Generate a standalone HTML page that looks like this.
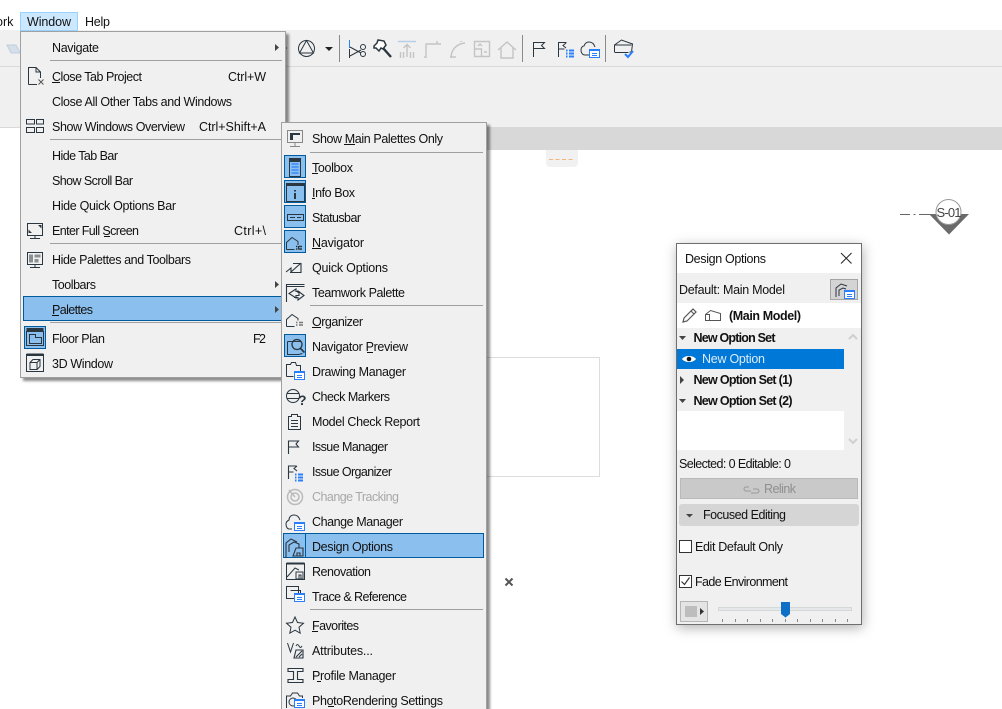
<!DOCTYPE html>
<html><head><meta charset="utf-8"><title>Design Options</title>
<style>
html,body{margin:0;padding:0;background:#fff;width:1002px;height:709px;overflow:hidden}
svg{display:block}
text{font-family:"Liberation Sans",sans-serif;font-size:12.5px;fill:#111}
.i{fill:none;stroke:#2a3640;stroke-width:1}
.g{fill:none;stroke:#c4c4c4;stroke-width:1.4}
.b{font-weight:bold}
</style></head><body>
<svg width="1002" height="709" viewBox="0 0 1002 709" xmlns="http://www.w3.org/2000/svg">
<defs>
<filter id="ms" x="-5%" y="-5%" width="112%" height="112%"><feDropShadow dx="3" dy="3" stdDeviation="1.4" flood-color="#000" flood-opacity=".45"/></filter>
<filter id="ds" x="-20%" y="-10%" width="140%" height="120%"><feDropShadow dx="1" dy="3" stdDeviation="6" flood-color="#000" flood-opacity=".3"/></filter>
<g id="card"><rect x=".5" y=".5" width="10" height="8" fill="#fff" stroke="#2a7fff"/><path d="M1 1.5h9M3 4.5h5M3 6.5h5" stroke="#2a7fff" fill="none"/></g>
<g id="dots"><path d="M0 .5h1.500M3 .5h5M0 3.500h1.500M3 3.500h5M0 6.500h1.500M3 6.500h5" stroke="#2a7fff" stroke-width="2" fill="none"/></g>
</defs>

<!-- app chrome -->
<rect x="0" y="30" width="1002" height="97" fill="#f0f0f0"/>
<rect x="0" y="66" width="1002" height="1" fill="#d9d9d9"/>
<rect x="0" y="127" width="1002" height="1" fill="#d9d9d9"/>
<rect x="281" y="127" width="721" height="23" fill="#d8d8d8"/>
<path d="M546 150h32v13a4 4 0 0 1-4 4h-24a4 4 0 0 1-4-4z" fill="#f1f1f1"/>
<path d="M549 159.500h26" stroke="#f5b57f" stroke-dasharray="4 2.500"/>
<path d="M7 45h9l4 8h-9z" fill="#d5dfea" stroke="#c0cede"/>

<!-- menu bar -->
<rect x="20.500" y="12.500" width="57" height="18" fill="#cce8ff" stroke="#99d1ff"/>
<text x="-4" y="26">ork</text>
<text x="27" y="26" textLength="44">Window</text>
<text x="85" y="26" textLength="25">Help</text>

<!-- toolbar -->
<g class="i"><circle cx="306.500" cy="48.500" r="8"/><path d="M306.500 40.500l7 12.500h-14z"/></g>
<path d="M325 47h8l-4 4z" fill="#222"/>
<path d="M339.500 35v27M522.500 35v27M605.500 35v27" stroke="#8a8a8a"/>
<path d="M349.500 40v8" stroke="#2a7fff"/><path d="M349.500 49v9" stroke="#2a3640"/>
<g class="i"><path d="M350 47l11 6M350 56l11-6"/><circle cx="363" cy="47" r="2.500"/><circle cx="363" cy="54" r="2.500"/></g>
<path d="M374 46l3-3 1-3 6 1 2 4-3 4-2-1-2 3-3-3-2 0z" fill="#fff" stroke="#2a3640" stroke-width="1.500"/><path d="M383 48l8 9" stroke="#2a3640" stroke-width="2.400"/>
<g class="g"><path d="M398 41.500h18" stroke="#b6cfe8"/><path d="M407 57V45M403.500 48l3.500-3.500 3.500 3.500M400.500 52v6M403.500 52v6M410.500 52v6M413.500 52v6"/>
<path d="M425 57h-1M426 58V44h15M426 57v-5M437 44v-3"/>
<path d="M450 57h6M451 58c0-8 5-14 14-15M461 42v-1"/>
<path d="M474.500 41.500h15v15h-15zM474.500 49h7v7.500M478 46l2-2 2 2M484 52l3 0"/>
<path d="M498 50l9-8 9 8M501 48v10h12V48"/></g>
<path d="M533.500 57V42.500h11l-3 3 3 3h-11" class="i" stroke-width="1.200"/>
<path d="M558.500 57V42.500h8M558.500 49h6M566 43l-3 2.500 3 2.500" class="i" stroke-width="1.200"/>
<use href="#dots" x="566" y="50"/>
<path d="M589 55h-4c-3 0-4-3-4-5 0-3 2-4 3-4 1-3 3-4 5-4 3 0 5 2 6 5" class="i"/>
<use href="#card" x="589" y="49"/>
<path d="M614.500 52V45l7-5 11 4-1 8-2 0M614.500 45h17M614.500 52.500h14" class="i" stroke-width="1.200"/>
<path d="M625 54l3 3 5-6" fill="none" stroke="#2a7fff" stroke-width="2"/>
<circle cx="286" cy="48" r=".8" fill="#333"/>

<!-- canvas -->
<path d="M487 357.500h112.500v119H487" fill="none" stroke="#dcdcdc"/>
<path d="M505.500 578.500l7 7M512.500 578.500l-7 7" stroke="#555" stroke-width="2"/>
<path d="M900 214.500h10M913.500 214.500h2M919 214.500h11" stroke="#666"/>
<path d="M929 214h40l-20 20.500z" fill="#6a6a6a"/>
<circle cx="948.500" cy="212" r="12.500" fill="#fff" stroke="#999"/>
<text x="936.500" y="217" textLength="25" style="fill:#444;font-size:13px">S-01</text>

<!-- Window menu -->
<g filter="url(#ms)"><rect x="20.500" y="31.500" width="265" height="346" fill="#f0f0f0" stroke="#a0a0a0"/></g>
<path d="M50 60.500h232M50 139.500h232M50 243.500h232M50 322.500h232" stroke="#a0a0a0"/>
<rect x="23.500" y="296.500" width="258" height="24" fill="#8bbfee" stroke="#005a9e"/>
<rect x="24.500" y="326.500" width="21" height="22" fill="#8bbfee" stroke="#005a9e"/>
<g>
<text x="52" y="52" textLength="47">Navigate</text>
<text x="52" y="81" textLength="90">Close Tab Project</text>
<text x="52" y="106" textLength="180">Close All Other Tabs and Windows</text>
<text x="52" y="131" textLength="133">Show Windows Overview</text>
<text x="52" y="160" textLength="66">Hide Tab Bar</text>
<text x="52" y="185" textLength="81">Show Scroll Bar</text>
<text x="52" y="210" textLength="124">Hide Quick Options Bar</text>
<text x="52" y="235" textLength="87">Enter Full Screen</text>
<text x="52" y="264" textLength="139">Hide Palettes and Toolbars</text>
<text x="52" y="289" textLength="44">Toolbars</text>
<text x="52" y="314" textLength="41">Palettes</text>
<text x="52" y="343" textLength="53">Floor Plan</text>
<text x="52" y="368" textLength="61">3D Window</text>
<text x="228" y="81" textLength="38">Ctrl+W</text>
<text x="199" y="131" textLength="67">Ctrl+Shift+A</text>
<text x="234" y="235" textLength="32">Ctrl+\</text>
<text x="253" y="343" textLength="13">F2</text>
</g>
<path d="M52 82.500h8M104 236.500h6M52 315.500h7" stroke="#111"/>
<path d="M275 44l4 3.500-4 3.500zM275 281l4 3.500-4 3.500zM275 306l4 3.500-4 3.500z" fill="#444"/>
<g class="i">
<path d="M28.500 84.500V67.500H36l4.500 4.500v6M36 67.500v4.500h4.500M28.500 84.500H37"/><path d="M38.500 79.500l5 5M43.500 79.500l-5 5" stroke="#555"/>
<path d="M26.500 119.500h8v4.500h-8zM36.500 119.500h7v4.500h-7zM26.500 127.500h8v5h-8zM36.500 127.500h7v5h-7z"/>
<path d="M27.500 223.500h15v12h-15zM35 236v2.500M30 238.500h10"/>
<path d="M27.500 252.500h15v12h-15zM35 265v2.500M30 267.500h10"/>
<path d="M26.500 331.500h17v14h-17zM29.500 334.500h6v3h6v6h-12z"/>
<path d="M26.500 354.500h17v17h-17zM30 362.500h7v7h-7zM30 362.500l3-3h7v7l-3 3M37 362.500l3-3"/>
</g>
<path d="M38 225h3.500v3.500zM32 233h-3.500v-3.500z" fill="#2a3640"/>
<path d="M29 254.500h4v8h-4zM34.500 254.500h6v3h-6zM34.500 259h4v3.500h-4z" fill="#8a8f93"/>
<rect x="26.500" y="328" width="17" height="3" fill="#2a3640"/>
<rect x="26.500" y="353.500" width="17" height="2.500" fill="#2a3640"/>

<!-- Palettes submenu -->
<g filter="url(#ms)"><rect x="281.500" y="122.500" width="205" height="600" fill="#f0f0f0" stroke="#a0a0a0"/></g>
<path d="M310 152.500h173M310 305.500h173M310 609.500h173" stroke="#a0a0a0"/>
<rect x="284.500" y="155.500" width="21" height="22" fill="#8bbfee" stroke="#005a9e"/>
<rect x="284.500" y="180.500" width="21" height="22" fill="#8bbfee" stroke="#005a9e"/>
<rect x="284.500" y="205.500" width="21" height="22" fill="#8bbfee" stroke="#005a9e"/>
<rect x="284.500" y="230.500" width="21" height="22" fill="#8bbfee" stroke="#005a9e"/>
<rect x="284.500" y="334.500" width="21" height="22" fill="#8bbfee" stroke="#005a9e"/>
<rect x="283.500" y="533.500" width="200" height="24" fill="#8bbfee" stroke="#005a9e"/>
<path d="M305.500 534v23" stroke="#005a9e"/>
<g>
<text x="312" y="143" textLength="131">Show Main Palettes Only</text>
<text x="312" y="172" textLength="41">Toolbox</text>
<text x="312" y="197" textLength="43">Info Box</text>
<text x="312" y="222" textLength="49">Statusbar</text>
<text x="312" y="247" textLength="52">Navigator</text>
<text x="312" y="272" textLength="76">Quick Options</text>
<text x="312" y="297" textLength="93">Teamwork Palette</text>
<text x="312" y="326" textLength="51">Organizer</text>
<text x="312" y="351" textLength="96">Navigator Preview</text>
<text x="312" y="376" textLength="94">Drawing Manager</text>
<text x="312" y="401" textLength="78">Check Markers</text>
<text x="312" y="426" textLength="108">Model Check Report</text>
<text x="312" y="451" textLength="76">Issue Manager</text>
<text x="312" y="476" textLength="80">Issue Organizer</text>
<text x="312" y="501" textLength="87" style="fill:#a8a8a8">Change Tracking</text>
<text x="312" y="526" textLength="91">Change Manager</text>
<text x="312" y="551" textLength="81">Design Options</text>
<text x="312" y="576" textLength="59">Renovation</text>
<text x="312" y="601" textLength="95">Trace &amp; Reference</text>
<text x="312" y="630" textLength="47">Favorites</text>
<text x="312" y="655" textLength="61">Attributes...</text>
<text x="312" y="680" textLength="84">Profile Manager</text>
<text x="312" y="705" textLength="131">PhotoRendering Settings</text>
</g>
<path d="M344 144.500h11M312 173.500h6M312 198.500h3M312 248.500h9M312 327.500h9M367 352.500h6M312 631.500h6M317 681.500h4M328 706.500h6" stroke="#111"/>
<g class="i">
<path d="M287.500 130.500h15v12h-15zM295 143v3M290 146.500h10" stroke="#888"/>
<path d="M290 133h10v2h-7v5h-3z" fill="#2a3640" stroke="none"/>
<path d="M289.500 158.500h11v18h-11zM289.500 161.500h11" stroke-width="1"/>
<path d="M286.500 183.500h18v18h-18z"/>
<path d="M287.500 214.500h16v6h-16zM290 217.500h5M297 217.500h4"/>
<path d="M286.500 249.500v-7l5.500-5 6 4v3.500M286.500 249.500h8M298.500 246v3.500"/>
<path d="M286 272l5-4v4l10-9M290 272.500h11v-9h-8" stroke-width="1.100"/>
<path d="M286.500 302V284.500h18M286.500 286.500h18M296 289l-7 4.500 7 4.500v-2.500h3v-4h-3zM298 293v-2l6 4.500-6 4.500v-2.500h-4" stroke-width="1.100"/>
<path d="M286.500 326.500v-7l5.500-5 6 4v2M286.500 326.500h8"/>
<path d="M287.500 341.500h14M287.500 341.500v13h11l4 -1"/><circle cx="297" cy="344.500" r="5" stroke-width="1.300"/><path d="M300.500 348.500l4 4" stroke-width="1.600"/>
<path d="M286.500 376.500v-12h4l1-2h4l1 3h4v6M286.500 376.500h7"/>
<circle cx="293" cy="396" r="6.500"/><path d="M287 393.500h12M287 398.500h12"/>
<path d="M288.500 416.500h3v-2h6v2h3v13h-12zM291 420.500h7M291 423.500h7M291 426.500h7"/>
<path d="M288.500 454V441h10l-2.500 3 2.500 3h-10" stroke-width="1.100"/>
<path d="M288.500 479V466h8M288.500 472h5M297 466l-3 2.500 3 2.500" stroke-width="1.100"/>
<path d="M292 529h-3c-2 0-3-3-3-5 0-2 1-3 3-4 0-3 2-5 5-5 3 0 5 2 6 5"/>
<path d="M286 558V543l5-4 6 3M289 552v-7l5-3 5 2v4M293 556h10v-8h-7zM297 553h3v3h-3z" stroke-width="1.100"/>
<path d="M286.500 563.500h18v16h-18zM287 577l8-9 4 2M296 572h7v7h-7zM299 575h2v4h-2z"/>
<path d="M286.500 586.500h12v12h-12zM290.500 590.500h10v4"/>
<path d="M295 617l2.500 5.500 6 .7-4.500 4 1.200 6-5.200-3-5.200 3 1.200-6-4.500-4 6-.7z"/>
<path d="M287.500 643l3 9 3-9M296 646c1-2 2-2 3 0s2 2 3 0"/><path d="M296 650l7 0v8h-9zM296 657l6-6M299 657l3-3" stroke-width="1.100"/>
<path d="M288 668.500h15v3h-5.500v8h5.500v3h-15v-3h5.500v-8H288z" stroke-width="1.100"/>
<path d="M286.500 708v-12h4l2-3h5l2 3h3v2"/><circle cx="293" cy="702" r="4"/>
</g>
<path d="M291.500 164h7M291.500 167h7M291.500 170h7M291.500 173h7" stroke="#2a7fff" stroke-width="1.300"/>
<rect x="289.500" y="158.500" width="11" height="3" fill="#2a3640"/>
<rect x="286.500" y="183" width="18" height="3" fill="#2a3640"/>
<path d="M294 190h2v1.500h-2zM294 193h2v6h-2z" fill="#2a3640"/>
<path d="M296 246.500h1.500M299 246.500h3M296 249h1.500M299 249h3" stroke="#2a3640" stroke-width="1.500"/>
<path d="M296 322.500h1.500M299 322.500h4M296 325h1.500M299 325h4" stroke="#777" stroke-width="1.500"/>
<use href="#card" x="294" y="371"/>
<text x="298" y="405" style="font-weight:bold;font-size:14px;fill:#2a3640">?</text>
<use href="#dots" x="295" y="474"/>
<g fill="none" stroke="#bbb" stroke-width="1.500"><circle cx="295" cy="497" r="7.500"/><circle cx="295" cy="497" r="4"/><path d="M289 490l6 7"/></g>
<use href="#card" x="294" y="522"/>
<use href="#card" x="294" y="593"/>
<use href="#card" x="294" y="699"/>
<rect x="286.500" y="562.500" width="18" height="2" fill="#2a3640"/>

<!-- Design Options dialog -->
<g filter="url(#ds)"><rect x="676.500" y="243.500" width="185" height="381" fill="#f0f0f0" stroke="#6e6e6e"/></g>
<rect x="677" y="244" width="184" height="29" fill="#fff"/>
<rect x="677" y="303" width="184" height="25" fill="#fff"/>
<text x="685" y="263" textLength="81">Design Options</text>
<path d="M841 253l10.500 10.500M851.500 253L841 263.500" stroke="#222" stroke-width="1"/>
<text x="679" y="294" textLength="106">Default: Main Model</text>
<rect x="830.500" y="279.500" width="27" height="20" fill="#d4d4d4" stroke="#a5a5a5"/>
<path d="M836 297v-9l5-4 6 2M839 296v-6l4-2 3 1" class="i"/>
<use href="#card" x="844" y="290"/>
<path d="M683 322l1-4 9-9 3 3-9 9zM691 311l3 3" fill="none" stroke="#555" stroke-width="1.200"/>
<path d="M705.500 320.500v-6l5-4 10 3v7zM705.500 314.500h4v6M712 320.500h8" fill="none" stroke="#555"/>
<text x="729" y="320" textLength="72" class="b">(Main Model)</text>

<rect x="677" y="328" width="167" height="83" fill="#f0f0f0"/>
<rect x="677" y="411" width="167" height="39" fill="#fff"/>
<rect x="677" y="349" width="167" height="20" fill="#0078d7"/>
<rect x="845" y="328" width="16" height="122" fill="#f0f0f0"/>
<path d="M849 339l4-4 4 4M849 439l4 4 4-4" fill="none" stroke="#cfcfcf" stroke-width="2"/>
<path d="M679 336h7l-3.500 4zM679 399h7l-3.500 4z" fill="#444"/>
<path d="M680 376l4 4-4 4z" fill="#444"/>
<text x="693.500" y="342" textLength="82" class="b">New Option Set</text>
<text x="693.500" y="384" textLength="99" class="b">New Option Set (1)</text>
<text x="693.500" y="405" textLength="99" class="b">New Option Set (2)</text>
<text x="702" y="363" textLength="63" style="fill:#dcecfb">New Option</text>
<path d="M682 359c3-4 11-4 14 0-3 4-11 4-14 0z" fill="#fff"/><circle cx="689" cy="359" r="2.300" fill="#111"/>

<text x="679" y="468" textLength="112">Selected: 0 Editable: 0</text>
<rect x="680.500" y="478.500" width="177" height="20" fill="#c9c9c9" stroke="#b9b9b9"/>
<path d="M749 487h-3a2 2 0 0 0 0 4h5M753 489h4a2 2 0 0 1 0 4h-6" fill="none" stroke="#999"/>
<text x="764" y="493" textLength="32" style="fill:#8f8f8f">Relink</text>
<rect x="679" y="504" width="180" height="22" rx="3" fill="#d5d5d5"/>
<path d="M686 514h7l-3.500 3.500z" fill="#444"/>
<text x="703" y="519" textLength="83">Focused Editing</text>
<rect x="679.500" y="540.500" width="12" height="12" fill="#fff" stroke="#333"/>
<text x="695" y="551" textLength="88">Edit Default Only</text>
<rect x="679.500" y="575.500" width="12" height="12" fill="#fff" stroke="#333"/>
<path d="M681.500 581.500l3 3 5-7" fill="none" stroke="#333" stroke-width="1.200"/>
<text x="695" y="586" textLength="93">Fade Environment</text>
<rect x="680.500" y="601.500" width="27" height="20" fill="#e4e4e4" stroke="#b5b5b5"/>
<rect x="685" y="606" width="12" height="11" fill="#bdbdbd"/>
<path d="M700 608l4 3.500-4 3.500z" fill="#333"/>
<rect x="718.500" y="607.500" width="133" height="3" fill="#e4e8e8" stroke="#d4d8d8"/>
<path d="M781 602h9v12l-4.500 3.500-4.500-3.500z" fill="#0f6fc6"/>
<path d="M722.500 619v3M735.500 619v3M747.500 619v3M760.500 619v3M772.500 619v3M785.500 619v3M797.500 619v3M810.500 619v3M822.500 619v3M835.500 619v3M847.500 619v3" stroke="#888"/>
</svg>
</body></html>
